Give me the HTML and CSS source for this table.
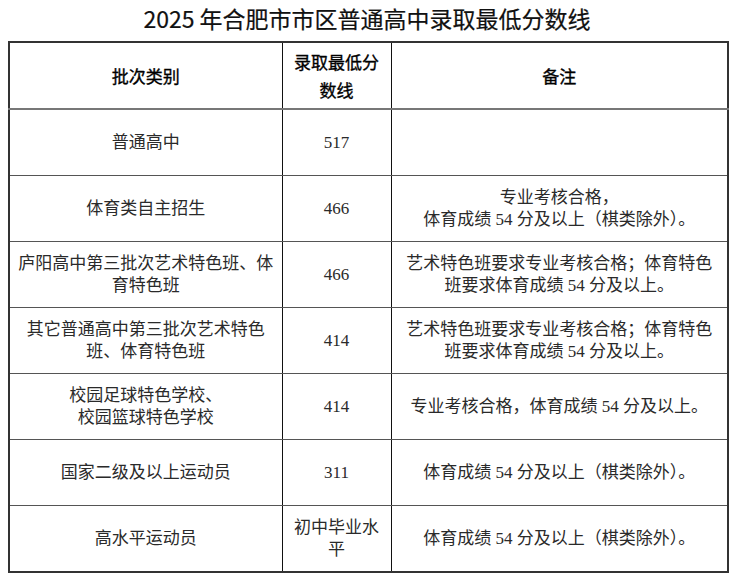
FILE: index.html
```html
<!DOCTYPE html>
<html lang="zh-CN">
<head>
<meta charset="utf-8">
<title>2025 年合肥市市区普通高中录取最低分数线</title>
<link rel="stylesheet" href="styles.css">
</head>
<body>
<h1 class="title">2025 年合肥市市区普通高中录取最低分数线</h1>
<table class="score-table">
  <colgroup>
    <col class="col-type">
    <col class="col-score">
    <col class="col-note">
  </colgroup>
  <thead>
    <tr>
      <th>批次类别</th>
      <th class="head-score">录取最低分数线</th>
      <th>备注</th>
    </tr>
  </thead>
  <tbody>
    <tr>
      <td>普通高中</td>
      <td>517</td>
      <td></td>
    </tr>
    <tr>
      <td>体育类自主招生</td>
      <td>466</td>
      <td>专业考核合格，<br>体育成绩 54 分及以上（棋类除外）。</td>
    </tr>
    <tr>
      <td>庐阳高中第三批次艺术特色班、体育特色班</td>
      <td>466</td>
      <td>艺术特色班要求专业考核合格；体育特色班要求体育成绩 54 分及以上。</td>
    </tr>
    <tr>
      <td>其它普通高中第三批次艺术特色班、体育特色班</td>
      <td>414</td>
      <td>艺术特色班要求专业考核合格；体育特色班要求体育成绩 54 分及以上。</td>
    </tr>
    <tr>
      <td>校园足球特色学校、<br>校园篮球特色学校</td>
      <td>414</td>
      <td>专业考核合格，体育成绩 54 分及以上。</td>
    </tr>
    <tr>
      <td>国家二级及以上运动员</td>
      <td>311</td>
      <td>体育成绩 54 分及以上（棋类除外）。</td>
    </tr>
    <tr>
      <td>高水平运动员</td>
      <td>初中毕业水平</td>
      <td>体育成绩 54 分及以上（棋类除外）。</td>
    </tr>
  </tbody>
</table>
</body>
</html>
```
FILE: styles.css
```css
html, body {
  margin: 0;
  padding: 0;
  background: #ffffff;
}

body {
  color: #222222;
}

.title {
  margin: 0;
  height: 36px;
  line-height: 36px;
  text-align: center;
  font-family: "Noto Sans CJK SC", "Liberation Sans", sans-serif;
  font-size: 23px;
  font-weight: 400;
  color: #111111;
  -webkit-text-stroke: 0.2px #111111;
}

.score-table {
  margin: 5px 0 0 8px;
  width: 719px;
  border-collapse: collapse;
  table-layout: fixed;
  border: 2px solid #333333;
}

.col-type { width: 273px; }
.col-score { width: 109px; }
.col-note { width: 337px; }

.score-table th,
.score-table td {
  border-left: 1px solid #111111;
  border-right: 1px solid #111111;
  border-top: 1px solid #555555;
  border-bottom: 1px solid #555555;
  text-align: center;
  vertical-align: middle;
  height: 65px;
  padding: 0 7px;
}

.score-table th {
  font-family: "Noto Sans CJK SC", "Liberation Sans", sans-serif;
  font-size: 17px;
  font-weight: 400;
  line-height: 28px;
  color: #000000;
  -webkit-text-stroke: 0.35px #000000;
  border-bottom: 2px solid #777777;
}

.score-table td {
  font-family: "Liberation Serif", "Noto Sans CJK SC", serif;
  font-size: 17px;
  font-weight: 400;
  line-height: 22px;
  color: #2a2a2a;
}
```
